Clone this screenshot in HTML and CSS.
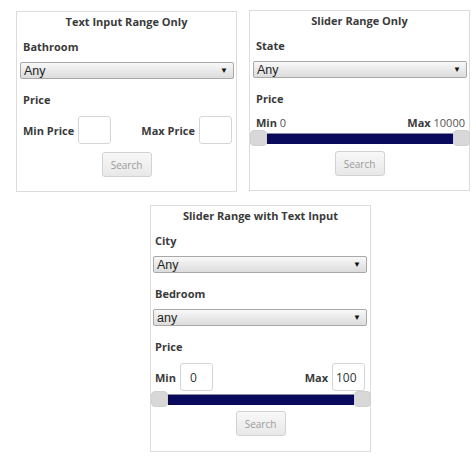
FILE: index.html
```html
<!DOCTYPE html>
<html>
<head>
<meta charset="utf-8">
<link rel="stylesheet" href="styles.css">
</head>
<body>
<div class="page">
  <div class="row">
    <section class="card card-a">
      <h2 class="title">Text Input Range Only</h2>
      <div class="label">Bathroom</div>
      <div class="select"><span>Any</span><span class="arrow">▼</span></div>
      <div class="label gap">Price</div>
      <div class="minmax">
        <div class="group"><span class="mm">Min Price</span><input class="num" type="text"></div>
        <div class="group"><span class="mm">Max Price</span><input class="num" type="text"></div>
      </div>
      <div class="actions a8"><button class="btn">Search</button></div>
    </section>
    <section class="card card-b">
      <h2 class="title">Slider Range Only</h2>
      <div class="label">State</div>
      <div class="select"><span>Any</span><span class="arrow">▼</span></div>
      <div class="label gap">Price</div>
      <div class="range-text">
        <span><b>Min</b> 0</span>
        <span><b>Max</b> 10000</span>
      </div>
      <div class="slider"><span class="handle"></span><span class="track"></span><span class="handle"></span></div>
      <div class="actions a5"><button class="btn">Search</button></div>
    </section>
  </div>
  <section class="card card-c">
    <h2 class="title">Slider Range with Text Input</h2>
    <div class="label">City</div>
    <div class="select"><span>Any</span><span class="arrow">▼</span></div>
    <div class="label gap">Bedroom</div>
    <div class="select"><span>any</span><span class="arrow">▼</span></div>
    <div class="label gap">Price</div>
    <div class="minmax">
      <div class="group"><span class="mm">Min</span><input class="num num-min" type="text" value="0"></div>
      <div class="group"><span class="mm">Max</span><input class="num num-max" type="text" value="100"></div>
    </div>
    <div class="slider"><span class="handle"></span><span class="track"></span><span class="handle"></span></div>
    <div class="actions a4"><button class="btn">Search</button></div>
  </section>
</div>
</body>
</html>
```
FILE: styles.css
```css
* { box-sizing: border-box; }
html, body { margin: 0; padding: 0; background: #fff; }
body {
  font-family: "Open Sans", "DejaVu Sans", sans-serif;
  color: #3a3a3a;
  font-size: 11px;
}
.page { padding: 10px 0 0 16px; }
.row { display: flex; gap: 12px; align-items: flex-start; }
.card {
  width: 221px;
  border: 1px solid #dcdcdc;
  padding-bottom: 14px;
}
.card-a { margin-top: 1px; }
.card-c { margin: 13px 0 0 134px; padding-bottom: 15px; }
.title {
  margin: 0;
  font-size: 11px;
  font-weight: 700;
  line-height: 20px;
  text-align: center;
  color: #3a3a3a;
}
.label {
  margin-top: 5px;
  padding-left: 6px;
  font-weight: 700;
  line-height: 20px;
  color: #3a3a3a;
}
.label.gap { margin-top: 11px; }
.select {
  display: flex;
  justify-content: space-between;
  align-items: center;
  height: 17px;
  margin: 5px 2px 0 3px;
  padding: 0 5px 0 3px;
  border: 1px solid #a8a8a8;
  border-radius: 2px;
  background: linear-gradient(#f8f8f8, #dcdcdc);
  font-family: "Liberation Sans", Arial, sans-serif;
  font-size: 12.5px;
  color: #222;
}
.arrow { font-size: 8px; color: #111; }
.minmax {
  display: flex;
  justify-content: space-between;
  margin-top: 6px;
  padding: 0 4px 0 6px;
}
.group { display: flex; align-items: center; gap: 4px; }
.mm { font-weight: 700; }
.num {
  width: 33px;
  height: 28px;
  margin: 0;
  padding: 0 3px;
  border: 1px solid #d6d6d6;
  border-radius: 3px;
  font-family: "Open Sans", sans-serif;
  font-size: 12px;
  color: #333;
  background: #fff;
}
.num-min { padding-left: 9px; }
.card-c .label { padding-left: 4px; }
.card-c .select { margin-left: 2px; margin-right: 3px; }
.card-c .minmax { padding: 0 5px 0 4px; }
.range-text {
  display: flex;
  justify-content: space-between;
  margin-top: 7px;
  padding: 0 4px 0 6px;
  line-height: 14px;
  color: #555;
}
.range-text b { color: #3a3a3a; }
.slider {
  display: flex;
  align-items: center;
  height: 16px;
  margin-right: -1px;
}
.handle {
  width: 17px;
  height: 16px;
  flex: none;
  background: #d8d8d8;
  border: 1px solid #d0d0d0;
  border-radius: 4px;
}
.track {
  flex: 1;
  height: 11px;
  background: #0a0a5c;
  border-top: 1px solid #8a8a9a;
}
.actions { display: flex; justify-content: center; }
.a8 { margin-top: 8px; }
.a5 { margin-top: 5px; }
.a4 { margin-top: 4px; }
.btn {
  width: 50px;
  height: 25px;
  padding: 0;
  border: 1px solid #d2d2d2;
  border-radius: 3px;
  background: linear-gradient(#f8f8f8, #e8e8e8);
  font-family: "Open Sans", sans-serif;
  font-size: 10px;
  color: #9a9a9a;
}
```
